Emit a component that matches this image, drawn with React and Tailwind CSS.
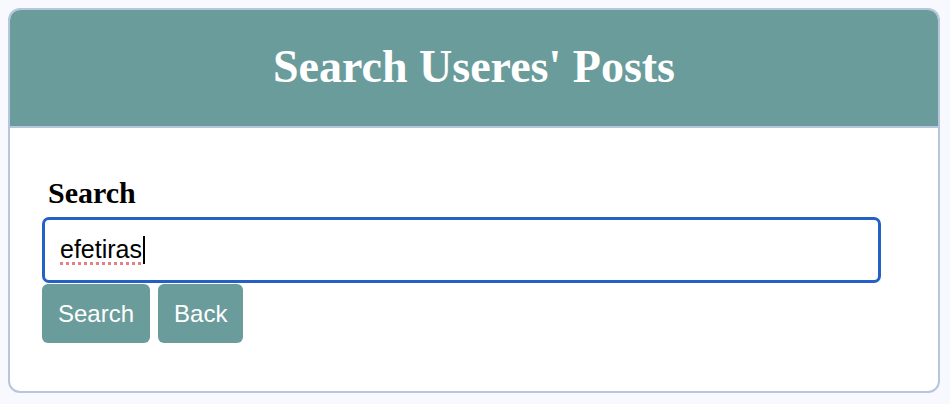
export default function App() {
  return (
    <div className="min-h-screen bg-[#f8f8ff] pt-[8px] pl-[8px]">
      <div className="w-[932px] h-[385px] rounded-[12px] border-2 border-[#b7c5dd] bg-white overflow-hidden">
        <div className="h-[116px] bg-[#6b9c9c] border-b-2 border-[#b7c5dd] flex items-center justify-center box-content">
          <h1 className="text-white font-bold text-[46px] leading-none font-['Liberation_Serif',serif] pb-[2px]">
            Search Useres' Posts
          </h1>
        </div>
        <div className="pl-[32px] pt-[50px]">
          <label className="block pl-[6px] text-[30px] leading-[30px] font-bold text-black font-['Liberation_Serif',serif]">
            Search
          </label>
          <div className="mt-[9px] w-[839px] h-[66px] rounded-[7px] border-[3px] border-[#2461c6] flex items-center pl-[15px] font-['Liberation_Sans',sans-serif] text-[25px] text-black">
            <span className="underline decoration-dotted decoration-[#e88080] decoration-[3px] underline-offset-[4px]">efetiras</span>
            <span className="w-[2px] h-[28px] bg-black ml-[1px]"></span>
          </div>
          <div className="flex gap-[8px] mt-[1px]">
            <button className="h-[59px] px-[16px] rounded-[6px] bg-[#6b9c9c] text-white text-[24px] font-['Liberation_Sans',sans-serif]">
              Search
            </button>
            <button className="h-[59px] px-[16px] rounded-[6px] bg-[#6b9c9c] text-white text-[24px] font-['Liberation_Sans',sans-serif]">
              Back
            </button>
          </div>
        </div>
      </div>
    </div>
  );
}
